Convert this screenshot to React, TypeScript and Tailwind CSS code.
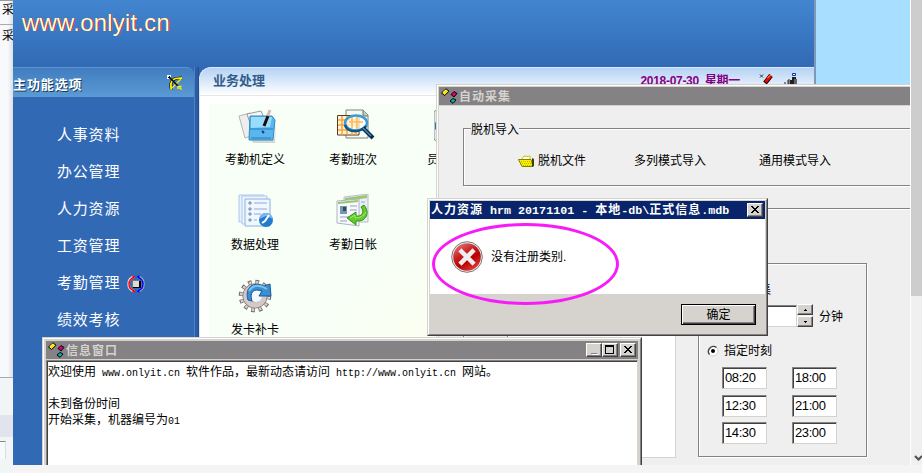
import type { ReactNode } from "react";

const menuItems = [
  { label: "人事资料" },
  { label: "办公管理" },
  { label: "人力资源" },
  { label: "工资管理" },
  { label: "考勤管理", active: true },
  { label: "绩效考核" },
];

const times = ["08:20", "18:00", "12:30", "21:00", "14:30", "23:00"];

function Mono({ children }: { children: ReactNode }) {
  return (
    <span className="font-['Liberation_Mono',monospace] text-[10px]">
      {children}
    </span>
  );
}

function TitleMono({ children }: { children: ReactNode }) {
  return (
    <span className="whitespace-pre font-['Liberation_Mono',monospace] text-[11.7px] tracking-normal">
      {children}
    </span>
  );
}

function CubesIcon() {
  return (
    <svg width="17" height="16" viewBox="0 0 17 16" className="shrink-0">
      <path d="M0.500 5L5 0.800L8 3.200L3.700 7.500Z" fill="#f7e700" stroke="#000" />
      <path d="M2 4.500L5 1.800" fill="none" stroke="#ffff9c" />
      <path d="M10 6.500L13 3.500L16 5.500L13 9Z" fill="#d6007b" stroke="#000" />
      <path d="M9 13L12 10.500L15 12L12 15.300Z" fill="#00b5b5" stroke="#000" />
    </svg>
  );
}

function BowIcon() {
  return (
    <svg width="16" height="16" viewBox="0 0 16 16">
      <path d="M4 14.500C4.500 13 3.500 11 4 8.500C5 5 8 3 11 3.500L15 3" fill="none" stroke="#000" strokeWidth="3" />
      <path d="M4 14.500C4.500 13 3.500 11 4 8.500C5 5 8 3 11 3.500L15 3" fill="none" stroke="#ffef00" strokeWidth="1.900" />
      <path d="M4 14L14.500 3.500" stroke="#ffef00" strokeWidth="1.100" />
      <path d="M1 1L12 12" stroke="#000" strokeWidth="1.400" />
      <path d="M0 0H4V1.500L1.500 4H0Z" fill="#fff" />
      <path d="M1 2H2V1H3V3H1Z" fill="#000" />
      <path d="M11 14V11.500H14.500M12.500 12.500L14.500 14.500" fill="none" stroke="#ffef00" strokeWidth="1.500" />
    </svg>
  );
}

function ActiveIcon() {
  return (
    <svg width="18" height="18" viewBox="0 0 18 18">
      <path d="M7 1.800A7.500 7.500 0 0 0 7 16.200" fill="none" stroke="#ddd" strokeWidth="2.600" />
      <path d="M11 1.800A7.500 7.500 0 0 1 11 16.200" fill="none" stroke="#aaa" strokeWidth="2.600" />
      <path d="M7 2.300A7 7 0 0 0 7 15.700" fill="none" stroke="#f00" strokeWidth="1.400" />
      <path d="M11 2.300A7 7 0 0 1 11 15.700" fill="none" stroke="#00f" strokeWidth="1.400" />
      <path d="M5.500 0L8.500 1.800L5.500 3.800ZM5.500 14.200L8.500 16.200L5.500 18Z" fill="#f00" />
      <path d="M12.500 0L9.500 1.800L12.500 3.800ZM12.500 14.200L9.500 16.200L12.500 18Z" fill="#00f" />
      <path d="M6 6H14V13H6Z" fill="#000" />
      <path d="M5 5H12V12H5Z" fill="#777" />
      <path d="M6 6H12V12H6Z" fill="#dedbd6" />
    </svg>
  );
}

function TabletIcon() {
  return (
    <svg width="40" height="36" viewBox="0 0 40 36">
      <path d="M13 31H36L38 14L37 34H15Z" fill="#000" opacity=".15" />
      <path d="M1 7L12 4L16 26L7 29Z" fill="#eee" stroke="#b5b5b5" />
      <path d="M9 5L23 2L26 9L12 14Z" fill="#f7f7f7" stroke="#999" />
      <path d="M12 7H34L37 11L35 31H11Z" fill="#5ab7ee" stroke="#3187c4" />
      <path d="M13 8H34L32 18L13 19Z" fill="#9adcfb" />
      <path d="M12 20H35M13 29H33" stroke="#237eb9" />
      <path d="M32 1L26 17" stroke="#d9b7bd" strokeWidth="3" />
      <path d="M30 7L26 17" stroke="#111" strokeWidth="3" />
      <path d="M24 22L26 24" stroke="#1b2fa8" strokeWidth="2" />
    </svg>
  );
}

function ShiftIcon() {
  return (
    <svg width="40" height="36" viewBox="0 0 40 36">
      <path d="M10 1H27L32 6V29H10Z" fill="#f5f8f3" stroke="#7c857c" />
      <path d="M27 1V7H32" fill="#bdcfbd" stroke="#687568" />
      <path d="M1.500 6.500H23V26H1.500Z" fill="#fff2d6" stroke="#5e3825" />
      <path
        d="M2 11H22M2 16H22M2 21H22M6 7V26M11 7V26M16 7V26M20 7V26"
        stroke="#f7a232"
        strokeWidth="1.500"
      />
      <ellipse cx="20" cy="14" rx="10" ry="7" fill="#fff" fillOpacity=".7" />
      <path d="M13 13H27M16 8V19M21 8V20" stroke="#ffb94c" strokeWidth="1.500" />
      <ellipse cx="20" cy="14" rx="11" ry="7.500" fill="none" stroke="#3e9bcf" strokeWidth="2.500" />
      <path d="M9 16C11 24 24 24 30 17" fill="none" stroke="#0b5788" strokeWidth="2.500" />
      <path d="M27 19L37 29" stroke="#0b2a44" strokeWidth="4" />
      <path d="M27 19L35 27" stroke="#3f8ccc" strokeWidth="1.500" />
    </svg>
  );
}

function StaffIcon() {
  return (
    <svg width="40" height="36" viewBox="0 0 40 36">
      <rect x="0" y="1" width="36" height="31" rx="3" fill="#e3e7ea" stroke="#999" />
      <path d="M1 14L5 9V24L1 20Z" fill="#237dac" />
      <path d="M2 16H5V22H2Z" fill="#102b51" />
    </svg>
  );
}

function DataIcon() {
  return (
    <svg width="40" height="36" viewBox="0 0 40 36">
      <path d="M1 1H26V28H1Z" fill="#e7f1ff" stroke="#adc7ec" />
      <path d="M4 2H29V30H4Z" fill="#edf5ff" stroke="#adc7ec" />
      <path d="M7 5H32V32H7Z" fill="#f1f7ff" stroke="#8db0df" />
      <path
        d="M11 8H13V10H11ZM11 14H13V16H11ZM11 19H13V21H11ZM11 25H13V27H11Z"
        fill="#d2e2f8"
        stroke="#6c8dbc"
      />
      <path d="M16 9H29M16 15H29M16 20H23M16 26H19" stroke="#92a8d5" strokeWidth="1.200" />
      <circle cx="28" cy="26" r="7" fill="#237ace" />
      <path d="M21 25C23 17 33 17 35 25L28 22Z" fill="#77b8f1" />
      <path d="M24 29L27 27L31 21" fill="none" stroke="#fff" strokeWidth="2" />
    </svg>
  );
}

function DiaryIcon() {
  return (
    <svg width="40" height="36" viewBox="0 0 40 36">
      <path d="M8 3L32 0V28H8Z" fill="#e9edf7" stroke="#b7bdce" />
      <path d="M9 4L31 1V4L9 7Z" fill="#9bc66e" />
      <path d="M1 7L23 5V32L1 29Z" fill="#f8f9fd" stroke="#aeb4c4" />
      <path d="M2 8L22 6V8L2 10Z" fill="#96c56d" />
      <path d="M4 12H11V20H4Z" fill="#6e9bb2" />
      <path d="M7 13H10V17H7Z" fill="#38465e" />
      <path d="M14 12H21M14 16H21M4 23H13M4 27H11M25 8H29" stroke="#b5bdcf" strokeWidth="1.500" />
      <path
        d="M28 11C34 18 31 28 20 27V31L11 24L20 18V22C26 23 29 18 25 13Z"
        fill="#64cc28"
        stroke="#348f1c"
      />
      <path d="M14 24L19 21V24C24 24 28 22 30 18" fill="none" stroke="#a5e96e" />
    </svg>
  );
}

function GearIcon() {
  return (
    <svg width="40" height="36" viewBox="0 0 40 36">
      <circle cx="17" cy="17" r="14" fill="none" stroke="#746867" strokeWidth="4.500" strokeDasharray="3.600 3.730" />
      <circle cx="17" cy="17" r="13.500" fill="none" stroke="#d8d0cf" strokeWidth="3.500" strokeDasharray="2.200 4.868" strokeDashoffset="-.700" />
      <circle cx="17" cy="17" r="9" fill="none" stroke="#80716f" strokeWidth="7" />
      <circle cx="17" cy="17" r="9" fill="none" stroke="#d2c9c8" strokeWidth="5.500" />
      <circle cx="18" cy="17" r="6" fill="#f4faff" />
      <path
        d="M10 21C6 8 16 2 26 7L32 5L33 17H21L24 12C16 9 11 13 14 22Z"
        fill="#398fd1"
        stroke="#195b9d"
      />
      <path d="M11 12C15 5 22 6 29 10" fill="none" stroke="#79c3ee" strokeWidth="2" />
    </svg>
  );
}

const shortcuts = [
  { label: "考勤机定义", icon: <TabletIcon /> },
  { label: "考勤班次", icon: <ShiftIcon /> },
  { label: "员工排班", icon: <StaffIcon /> },
  { label: "数据处理", icon: <DataIcon /> },
  { label: "考勤日帐", icon: <DiaryIcon /> },
  null,
  { label: "发卡补卡", icon: <GearIcon /> },
];

function WindowButton({ kind }: { kind: "min" | "max" | "close" }) {
  return (
    <span className="flex h-[14px] w-4 items-center justify-center border border-t-white border-l-white border-r-[#424142] border-b-[#424142] bg-[#d6d3ce] shadow-[inset_-1px_-1px_0_#848284]">
      <svg width="12" height="10" viewBox="0 0 12 10" shapeRendering="crispEdges">
        {kind === "min" && (
          <>
            <path d="M4 9H10V10H4Z" fill="#fff" />
            <path d="M3 8H9V9H3Z" fill="#848284" />
          </>
        )}
        {kind === "max" && (
          <path d="M1 0H10V9H1ZM2 2V8H9V2Z" fill="#000" fillRule="evenodd" />
        )}
        {kind === "close" && (
          <path
            d="M2 1H4V2H5V3H7V2H8V1H10V2H9V3H8V4H7V5H8V6H9V7H10V8H8V7H7V6H5V7H4V8H2V7H3V6H4V5H5V4H4V3H3V2H2Z"
            fill="#000"
          />
        )}
      </svg>
    </span>
  );
}

function MainWindow() {
  return (
    <div className="h-[465px] w-[803px] border-r-2 border-[#8098b8] bg-gradient-to-b from-[#4286cf] to-[#3169b5] to-[67px]">
      <div className="h-[67px] pt-[9px] pl-[9px] text-[24px] leading-7 tracking-[0.2px] text-[#ffffd6] [text-shadow:1px_0_0_#c52020]">
        www.onlyit.cn
      </div>
      <div className="flex h-[398px]">
        <div className="w-[182px] border-r border-[#4f82c0] bg-[#3169b5]">
          <div className="flex h-[30px] items-center justify-between rounded-tr-lg border-t border-[#5b93cf] bg-gradient-to-b from-[#417dbf] to-[#5a9ad5] pr-[11px]">
            <span className="pt-[4px] text-[13px] leading-4 font-bold tracking-[0.9px] text-white [text-shadow:1px_1px_0_#183c5a]">
              主功能选项
            </span>
            <BowIcon />
          </div>
          <div className="flex flex-col pt-[20px] pl-[44px]">
            {menuItems.map((item) => (
              <div
                key={item.label}
                className="flex h-[37px] items-center gap-[7px] text-[15px] tracking-[0.8px] text-white"
              >
                {item.label}
                {item.active && <ActiveIcon />}
              </div>
            ))}
          </div>
        </div>
        <div className="w-1 border-r border-[#234f8b] bg-[#2b5da5]" />
        <div className="min-w-0 flex-1 overflow-hidden rounded-tl-xl border-t border-l border-[#d6e8fc] bg-white">
          <div className="flex h-7 justify-between border-b border-[#e7e7e7] bg-gradient-to-b from-[#b5d2f3] to-white pr-[14px] pl-[13px]">
            <span className="pt-[5px] text-[13px] leading-4 font-bold text-[#315d8c]">
              业务处理
            </span>
            <div className="flex items-start pt-[3px]">
              <span className="pt-[2px] font-['Liberation_Sans','Noto_Sans_CJK_SC',sans-serif] text-[12px] leading-4 font-bold tracking-[-0.3px] whitespace-pre text-[#840084]">
                2018-07-30  星期一
              </span>
              <svg width="44" height="18" viewBox="0 0 44 18" className="ml-4">
                <path d="M4 3.500L7 6.500M7 3.500L4 6.500" stroke="#333" />
                <path d="M9 12L15 4.500" stroke="#000" strokeWidth="4.500" />
                <path d="M9.500 11L15 4.500" stroke="#f00" strokeWidth="3" />
                <path d="M11.500 7L14.500 4" stroke="#ffce00" />
                <path d="M36.500 2.500H39.500V4.500H36.500Z" fill="#fff" stroke="#003cb5" />
                <path d="M36 6H40V17H34V9H36Z" fill="#222" />
                <path d="M38 8H41V17H38Z" fill="#666" />
                <path d="M28 12H30M32 13V9M33 16V8" stroke="#222" />
              </svg>
            </div>
          </div>
          <div className="mt-2 ml-[9px] grid h-[360px] grid-cols-[repeat(3,98px)] content-start bg-[#f7fff7] bg-[radial-gradient(circle_at_230px_260px,#fcfff0_0,#f7fff7_150px)] pt-[5px]">
            {shortcuts.map((item, index) =>
              item ? (
                <div key={item.label} className="flex h-[85px] flex-col items-center text-[12px] leading-4 text-black">
                  <div className="flex h-[43px] w-[40px]">{item.icon}</div>
                  <span className="-translate-x-[3px]">{item.label}</span>
                </div>
              ) : (
                <div key={index} />
              )
            )}
          </div>
        </div>
      </div>
    </div>
  );
}

function TimeInput({ value }: { value: string }) {
  return (
    <div className="h-[22px] w-[45px] border border-t-[#848284] border-l-[#848284] border-r-[#d6d3ce] border-b-[#d6d3ce] bg-white pt-[2px] pl-[2px] font-['Liberation_Sans',sans-serif] text-[13px] leading-4 tracking-[-0.4px] shadow-[inset_1px_1px_0_#424142]">
      {value}
    </div>
  );
}

function SpinButton({ up }: { up?: boolean }) {
  return (
    <span className="flex h-[11px] w-4 items-center justify-center border border-t-white border-l-white border-r-[#424142] border-b-[#424142] bg-[#d6d3ce] shadow-[inset_-1px_-1px_0_#848284]">
      <svg width="3" height="2" shapeRendering="crispEdges">
        <path d={up ? "M1 0H2V1H3V2H0V1H1Z" : "M0 0H3V1H2V2H1V1H0Z"} />
      </svg>
    </span>
  );
}

function CollectWindow() {
  return (
    <div className="h-[390px] w-[500px] border-t border-l border-[#d6d3ce] bg-[#efefef] text-[12px] text-black">
      <div className="h-full border-t border-l border-white">
        <div className="h-full border-t border-l border-[#d6d3ce]">
          <div className="flex h-[19px] items-center border-b border-[#d6d3ce] bg-[#848284] pl-[2px] text-[12px] leading-4 font-bold tracking-[1px] text-[#d6d3ce]">
            <CubesIcon />
            <span className="pt-px pl-[1px]">自动采集</span>
          </div>
          <div className="mt-[22px] ml-6 flex h-[58px] w-[600px] flex-col items-start border border-[#848284] shadow-[inset_1px_1px_0_#fff,1px_1px_0_#fff]">
            <span className="-mt-[7px] ml-[7px] bg-[#efefef] leading-4">脱机导入</span>
            <div className="mt-[15px] flex items-center pl-[54px] leading-4">
              <svg width="17" height="13" viewBox="0 0 17 13">
                <path d="M4 4L6 1L9 1.500L12 1V5H4Z" fill="#fff" stroke="#c8c400" />
                <path d="M0.500 4.500H13L15 11.500H4Z" fill="#f7f300" stroke="#848200" />
                <path d="M3 6.500H13M4 8.500H14M5 10.500H14" stroke="#bdb600" strokeDasharray="1 1" />
                <path d="M14 3L16 4V11L14 12Z" fill="#424100" />
              </svg>
              <span className="ml-[3px]">脱机文件</span>
              <span className="ml-[48px]">多列模式导入</span>
              <span className="ml-[53px]">通用模式导入</span>
            </div>
          </div>
          <div className="mt-[22px] ml-6 flex h-[300px] w-[600px] items-start border border-[#848284] shadow-[inset_1px_1px_0_#fff]">
            <div className="ml-[43px] h-[249px] w-[169px] border border-t-[#848284] border-l-[#848284] border-r-[#d6d3ce] border-b-[#d6d3ce] bg-white" />
            <div className="mt-[54px] ml-[22px] flex h-[194px] w-[169px] flex-col border border-[#848284] pl-2 shadow-[inset_1px_1px_0_#fff,1px_1px_0_#fff]">
              <div className="mt-[18px] pl-4 leading-4">间隔采集</div>
              <div className="mt-[6px] flex h-[23px] items-center">
                <div className="ml-4 h-[22px] w-[74px] border border-t-[#848284] border-l-[#848284] border-r-[#d6d3ce] border-b-[#d6d3ce] bg-white shadow-[inset_1px_1px_0_#424142]" />
                <div className="flex flex-col gap-px pr-[6px]">
                  <SpinButton up />
                  <SpinButton />
                </div>
                <span className="pt-[2px]">分钟</span>
              </div>
              <div className="mt-[16px] flex items-center gap-[5px] leading-4">
                <svg width="12" height="12" viewBox="0 0 12 12">
                  <circle cx="6" cy="6" r="5" fill="#fff" stroke="#d6d3ce" />
                  <path d="M2.500 9.500A5 5 0 0 1 9.500 2.500" fill="none" stroke="#424142" strokeWidth="1.300" />
                  <circle cx="6" cy="6" r="2" />
                </svg>
                指定时刻
              </div>
              <div className="mt-[8px] ml-[15px] grid grid-cols-[70px_70px] gap-y-[5.500px]">
                {times.map((time) => (
                  <TimeInput key={time} value={time} />
                ))}
              </div>
            </div>
          </div>
        </div>
      </div>
    </div>
  );
}

function InfoWindow() {
  return (
    <div className="h-[140px] w-[600px] border border-t-[#d6d3ce] border-l-[#d6d3ce] border-r-[#424142] bg-[#d6d3ce]">
      <div className="h-full border-t border-l border-r border-t-white border-l-white border-r-[#848284] px-[2px] pt-[2px]">
        <div className="flex h-[18px] items-center bg-[#848284] pr-[2px] pl-[2px] text-[12px] font-bold tracking-[1px] text-[#d6d3ce]">
          <CubesIcon />
          <span className="flex-1 pt-px pl-[1px]">信息窗口</span>
          <WindowButton kind="min" />
          <WindowButton kind="max" />
          <span className="w-[2px]" />
          <WindowButton kind="close" />
        </div>
        <div className="mt-[1px] h-[120px] border border-t-[#848284] border-l-[#848284] border-r-[#d6d3ce] bg-white pt-[3px] pl-[1px] text-[12px] leading-4 whitespace-nowrap text-black shadow-[inset_1px_1px_0_#424142]">
          <p className="h-4">
            欢迎使用<Mono> www.onlyit.cn </Mono>软件作品，最新动态请访问
            <Mono> http://www.onlyit.cn </Mono>网站。
          </p>
          <p className="mt-4 h-4">未到备份时间</p>
          <p className="h-4">
            开始采集，机器编号为<Mono>01</Mono>
          </p>
        </div>
      </div>
    </div>
  );
}

function ErrorDialog() {
  return (
    <div className="h-[138px] w-[341px] border border-t-[#d6d3ce] border-l-[#d6d3ce] border-r-[#424142] border-b-[#424142] bg-[#d6d3ce] text-[12px] text-black">
      <div className="h-full border border-t-white border-l-white border-r-[#848284] border-b-[#848284] pt-[1px] pr-[1px] pl-px">
        <div className="flex h-[18px] items-center justify-between bg-[#08246b] pr-[2px] pl-[1px] font-bold tracking-[1px] whitespace-nowrap text-white">
          <span className="leading-4">
            人力资源<TitleMono> hrm 20171101 - </TitleMono>本地
            <TitleMono>-db\</TitleMono>正式信息<TitleMono>.mdb</TitleMono>
          </span>
          <WindowButton kind="close" />
        </div>
        <div className="flex h-[75px] items-center gap-[8px] bg-white pl-[21px] leading-4">
          <svg width="32" height="32" viewBox="0 0 32 32">
            <defs>
              <linearGradient id="error" x1="0" y1="0" x2=".6" y2="1">
                <stop stopColor="#e98b8b" />
                <stop offset=".45" stopColor="#c91f22" />
                <stop offset=".7" stopColor="#b80000" />
                <stop offset="1" stopColor="#dc3535" />
              </linearGradient>
            </defs>
            <circle cx="16" cy="16" r="15.300" fill="#eee" stroke="#777" />
            <circle cx="16" cy="16" r="13.800" fill="url(#error)" />
            <path d="M10.500 10.500L21.500 21.500M21.500 10.500L10.500 21.500" stroke="#eee" strokeWidth="4.500" strokeLinecap="square" />
          </svg>
          <span>没有注册类别.</span>
        </div>
        <div className="flex justify-end pt-[10px] pr-[9px]">
          <button className="h-[21px] w-[75px] border border-black bg-[#d6d3ce] leading-4 shadow-[inset_1px_1px_0_#fff,inset_-1px_-1px_0_#424142,inset_-2px_-2px_0_#848284]">
            确定
          </button>
        </div>
      </div>
    </div>
  );
}

function Backdrop() {
  return (
    <div className="h-[473px] w-[13px] overflow-hidden border-t border-[#999] bg-gradient-to-r from-[#f8f9fd] from-60% to-[#dcdfe4] text-[12px] leading-4 text-black">
      <div className="h-6 border-b border-[#aaa] pl-[2px]">采</div>
      <div className="h-[353px] border-b border-[#aaa] pt-[2px] pl-[2px]">采</div>
      <div className="h-[37px] bg-[#f1f5f5]" />
      <div className="h-[22px] bg-[#e2e4ed]" />
      <div className="h-9 bg-[#f1f5f5] pt-1">
        <div className="h-[18px] w-[6px] border-t border-r border-t-[#888] border-r-[#ddd] bg-[#f8f9fd]" />
      </div>
    </div>
  );
}

export default function App() {
  return (
    <div className="flex h-[473px] w-[922px] overflow-hidden bg-[#f4f4f4] font-['Noto_Sans_CJK_SC',sans-serif]">
      <Backdrop />
      <div className="relative h-[465px] w-[897px] overflow-hidden bg-[#a8deff] font-['Liberation_Sans','Noto_Sans_CJK_SC',sans-serif]">
        <MainWindow />
        <div className="absolute top-[84px] left-[423px]">
          <CollectWindow />
        </div>
        <div className="absolute top-[337px] left-[29px]">
          <InfoWindow />
        </div>
        <div className="absolute top-[198px] left-[414px]">
          <ErrorDialog />
        </div>
        {/* highlight drawn over the error message */}
        <div className="absolute top-[223px] left-[419px] h-[82px] w-[187px] rounded-[50%] border-[3px] border-[#f71cf7]" />
      </div>
      <div className="flex h-[465px] w-3 flex-col justify-between overflow-hidden border-l border-white bg-[#f0f0f0]">
        <div className="h-[296px] bg-[#cdcdcd]" />
        <svg width="11" height="14" viewBox="0 0 11 14">
          <path d="M4 5L7.500 8.500L11 5" fill="none" stroke="#555" strokeWidth="2.200" />
        </svg>
      </div>
    </div>
  );
}
